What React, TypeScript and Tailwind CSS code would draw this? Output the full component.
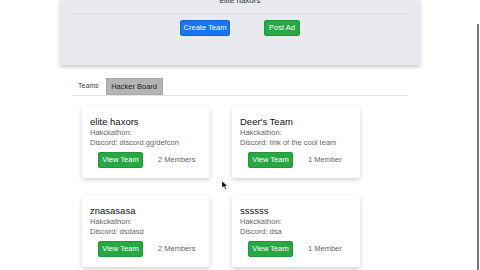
import React from 'react';

type Team = {
  name: string;
  discord: string;
  members: string;
};

const teams: Team[] = [
  { name: 'elite haxors', discord: 'discord.gg/defcon', members: '2 Members' },
  { name: "Deer's Team", discord: 'link of the cool team', members: '1 Member' },
  { name: 'znasasasa', discord: 'dsdasd', members: '2 Members' },
  { name: 'ssssss', discord: 'dsa', members: '1 Member' },
];

const TeamCard: React.FC<{ team: Team }> = ({ team }) => (
  <div className="h-[71px] bg-white rounded-[3px] shadow-[0_2px_5px_rgba(0,0,0,0.18)] px-[8px] pt-[8px]">
    <h3 className="text-[9.5px] leading-[13px] text-[#111]">{team.name}</h3>
    <p className="text-[7.5px] leading-[10px] text-[#666]">Hakckathon:</p>
    <p className="text-[7.5px] leading-[10px] text-[#666]">Discord: {team.discord}</p>
    <div className="mt-[4px] ml-[8px] flex items-center">
      <button className="w-[45px] h-[16px] bg-[#28a745] border border-[#23963d] rounded-[2px] text-white text-[7.5px] leading-none">
        View Team
      </button>
      <span className="ml-[15px] text-[7.5px] text-[#666]">{team.members}</span>
    </div>
  </div>
);

export default function App() {
  return (
    <div className="relative w-[480px] h-[270px] overflow-hidden bg-white font-['Liberation_Sans',Arial,sans-serif]">
      {/* Team header panel */}
      <div className="mx-auto w-[360px] h-[65px] flex flex-col bg-[#e9eaef] shadow-[0_2px_4px_rgba(0,0,0,0.22)] px-[12px]">
        <p className="-mt-[4px] text-center text-[8px] leading-[10px] text-[#333]">elite haxors</p>
        <div className="mt-[7px] border-t border-[#d9dadf]" />
        <div className="mt-[6px] flex justify-center gap-[34px]">
          <button className="w-[50px] h-[16px] bg-[#1a73f0] border border-[#1666d6] rounded-[2px] text-white text-[7.5px] leading-none">
            Create Team
          </button>
          <button className="w-[36px] h-[16px] bg-[#28a745] border border-[#23963d] rounded-[2px] text-white text-[7.5px] leading-none">
            Post Ad
          </button>
        </div>
      </div>

      {/* Tabs + team grid */}
      <div className="mx-auto w-[336px] mt-[13px]">
        <div className="flex items-end h-[18px] border-b border-[#e6e6e6]">
          <span className="ml-[6px] mb-[4px] text-[7px] text-[#444]">Teams</span>
          <span className="ml-[7px] h-[17px] w-[57px] bg-[#b4b4b4] border border-[#a8a8a8] flex items-center justify-center text-[7.5px] text-[#222]">
            Hacker Board
          </span>
        </div>
        <div className="mt-[11px] pl-[10px] grid grid-cols-[128px_128px] gap-x-[22px] gap-y-[18px]">
          {teams.map((team) => (
            <TeamCard key={team.name} team={team} />
          ))}
        </div>
      </div>

      {/* scrollbar */}
      <div className="absolute right-[1px] top-[24px] w-[2px] h-[246px] bg-[#777]" />

      {/* mouse cursor */}
      <svg className="absolute left-[222px] top-[181px]" width="6" height="9" viewBox="0 0 6 9">
        <path d="M0 0 L0 7 L2 5.5 L3.5 8.5 L4.5 8 L3 5 L5.5 5 Z" fill="#000" stroke="#fff" strokeWidth="0.5" />
      </svg>
    </div>
  );
}
